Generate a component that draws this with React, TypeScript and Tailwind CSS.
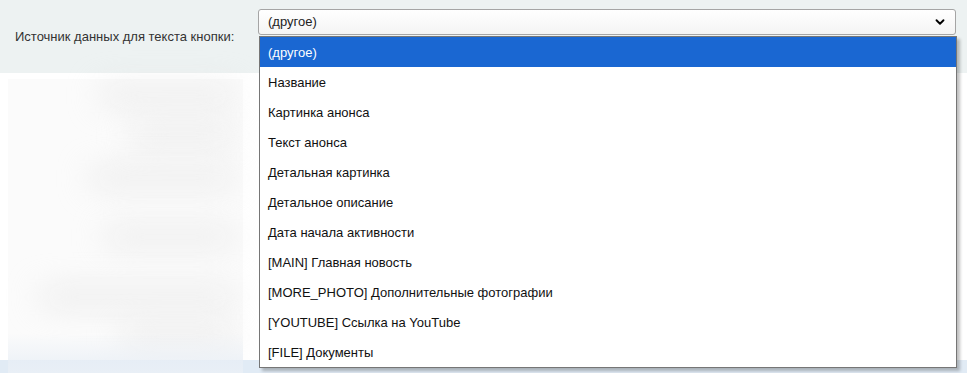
import { ChevronDown } from 'lucide-react';

const OPTIONS = [
  '(другое)',
  'Название',
  'Картинка анонса',
  'Текст анонса',
  'Детальная картинка',
  'Детальное описание',
  'Дата начала активности',
  '[MAIN] Главная новость',
  '[MORE_PHOTO] Дополнительные фотографии',
  '[YOUTUBE] Ссылка на YouTube',
  '[FILE] Документы',
];

// blurred rows behind the open list: [top offset, left x]
const GHOST_ROWS: [number, number][] = [
  [10, 100],
  [50, 130],
  [93, 90],
  [152, 105],
  [212, 40],
  [252, 120],
];

export default function App() {
  return (
    <div className="relative w-[967px] h-[373px] overflow-hidden bg-white font-['Liberation_Sans',Arial,sans-serif] text-[13px]">
      <div className="flex items-start h-[73px] bg-[#edf2f2]">
        <div className="self-center pl-[15px] w-[258px] text-[#333] leading-none">
          Источник данных для текста кнопки:
        </div>
        <div className="mt-[9px] flex items-center justify-between w-[698px] h-[26px] pl-[9px] pr-[8px] rounded-[3px] border border-[#a5a5a5] bg-gradient-to-b from-white to-[#f4f4f4] text-[#222]">
          <span>(другое)</span>
          <ChevronDown className="w-[14px] h-[14px] text-black" strokeWidth={3.2} />
        </div>
      </div>

      <div className="flex pt-[6px] h-[300px]">
        <div className="relative ml-[8px] w-[235px] h-full bg-[#fbfbfb]">
          {GHOST_ROWS.map(([top, left], i) => (
            <div
              key={i}
              className="absolute right-[8px] h-[12px] rounded-full bg-[#e2e2e2] blur-lg"
              style={{ top, left: left - 8 }}
            />
          ))}
        </div>
      </div>
      <div className="absolute left-0 right-0 bottom-0 h-[13px] bg-[#e1ebf5]" />
      <div className="absolute left-[8px] w-[235px] bottom-0 h-[40px] bg-gradient-to-b from-[#fbfbfb]/0 to-[#e9eff6]" />

      <div className="absolute left-[259px] top-[36px] w-[698px] border border-[#767676] bg-white shadow-[3px_3px_3px_rgba(0,0,0,0.25)]">
        {OPTIONS.map((opt, i) => (
          <div
            key={opt}
            className={
              'h-[30px] flex items-center pl-[8px] pt-px ' +
              (i === 0 ? 'bg-[#1a67d2] text-white' : 'text-[#111]')
            }
          >
            {opt}
          </div>
        ))}
      </div>
    </div>
  );
}
